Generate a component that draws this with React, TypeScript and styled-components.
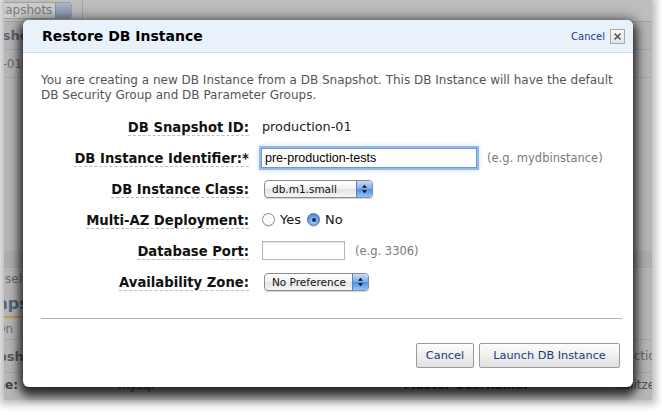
import React from "react";
import styled, { createGlobalStyle } from "styled-components";

const Global = createGlobalStyle`
  html, body { margin: 0; padding: 0; background: #fff; }
  body { width: 662px; height: 415px; overflow: hidden; font-family: "DejaVu Sans", Verdana, sans-serif; }
  * { box-sizing: border-box; }
`;

const Stage = styled.div`
  width: 662px;
  height: 415px;
  padding: 0 10px 15px 4px;
  background: #fff;
`;

const Backdrop = styled.div`
  position: relative;
  height: 100%;
  background: #b6b6b6;
  box-shadow: 0 0 8px 4px #b9b9b9;
`;

/* ---------- dimmed console behind the dialog ---------- */
const ConsolePage = styled.div`
  height: 100%;
  overflow: hidden;
  display: flex;
  flex-direction: column;
  color: #6a6a6a;
  font: 12px "DejaVu Sans", Verdana, sans-serif;
`;

const TopBar = styled.div`
  height: 22px;
  flex: none;
  display: flex;
  align-items: center;
  background: #bebebe;
  border-bottom: 1px solid #a4a4a4;
`;

const ViewSelect = styled.div`
  margin-left: -19px;
  width: 87px;
  height: 17px;
  display: flex;
  border: 1px solid #9d9d9d;
  border-radius: 3px;
  background: #cdcdcd;
  overflow: hidden;
`;

const ViewSelectText = styled.span`
  flex: 1;
  padding-left: 4px;
  line-height: 15px;
  color: #7a7a7a;
`;

const ViewStepper = styled.span`
  width: 16px;
  background: linear-gradient(#a9b6c8, #8797ae);
  border-left: 1px solid #8a94a3;
`;

const ToolbarSep = styled.span`
  margin-left: 10px;
  width: 1px;
  height: 22px;
  background: #a6a6a6;
`;

const ListRow = styled.div<{ $h: number; $band?: boolean }>`
  height: ${(p) => p.$h}px;
  flex: none;
  display: flex;
  align-items: center;
  white-space: nowrap;
  border-bottom: 1px solid #a7a7a7;
  background: ${(p) => (p.$band ? "#adadad" : "transparent")};
`;

const Spacer = styled.div<{ $h: number }>`
  height: ${(p) => p.$h}px;
  flex: none;
`;

const CutText = styled.span<{ $x: number; $bold?: boolean; $size?: number; $color?: string }>`
  margin-left: ${(p) => p.$x}px;
  font-weight: ${(p) => (p.$bold ? 700 : 400)};
  font-size: ${(p) => p.$size ?? 12}px;
  color: ${(p) => p.$color ?? "#6a6a6a"};
  white-space: nowrap;
`;

const PlainRow = styled.div<{ $h: number }>`
  height: ${(p) => p.$h}px;
  flex: none;
  display: flex;
  align-items: center;
  white-space: nowrap;
`;

const TabLine = styled.div`
  height: 2px;
  width: 20px;
  flex: none;
  background: #c49a4a;
`;

const TabBox = styled.span`
  margin-left: 8px;
  width: 8px;
  height: 18px;
  border: 1px solid #9a9a9a;
  border-right: none;
  background: #bcbcbc;
`;

const DetailRow = styled.div`
  height: 24px;
  flex: none;
  display: grid;
  grid-template-columns: 14px 300px 210px 1fr;
  align-items: center;
  white-space: nowrap;
`;

const DetailLabel = styled.span`
  display: flex;
  justify-content: flex-end;
  font-weight: 700;
  color: #3f3f3f;
`;

const DetailValue = styled.span<{ $pad: number }>`
  padding-left: ${(p) => p.$pad}px;
  color: #505050;
`;

/* ---------- dialog ---------- */
const Dialog = styled.div`
  position: absolute;
  left: 19px;
  top: 20px;
  width: 610px;
  height: 367px;
  display: flex;
  flex-direction: column;
  background: #fff;
  border-radius: 6px;
  overflow: hidden;
  box-shadow: 0 6px 10px 3px rgba(0, 0, 0, 0.7), 0 0 14px 3px rgba(0, 0, 0, 0.35);
`;

const Header = styled.div`
  height: 33px;
  flex: none;
  display: flex;
  align-items: center;
  justify-content: space-between;
  padding: 0 8px 0 19px;
  background: #e9f2fb;
  border-bottom: 1px solid #c8dbef;
`;

const Title = styled.h1`
  margin: 0;
  font: 700 14px "DejaVu Sans", Verdana, sans-serif;
  color: #000;
`;

const HeaderActions = styled.div`
  display: flex;
  align-items: center;
  gap: 5px;
`;

const CancelLink = styled.a`
  font: 10px "DejaVu Sans", Verdana, sans-serif;
  color: #1c3c8c;
  text-decoration: none;
`;

const CloseBox = styled.span`
  width: 15px;
  height: 15px;
  display: flex;
  align-items: center;
  justify-content: center;
  border: 1px solid #a8a8a8;
  background: linear-gradient(#fafafa, #e2e2e2);
`;

const Body = styled.div`
  flex: 1;
  display: flex;
  flex-direction: column;
  padding: 20px 11px 0 18px;
`;

const Intro = styled.p`
  margin: 0;
  font: 12px/15px "DejaVu Sans", Verdana, sans-serif;
  color: #555;
`;

const Form = styled.div`
  margin-top: 8px;
  display: grid;
  grid-template-columns: 208px 1fr;
  grid-auto-rows: 31px;
  column-gap: 12px;
  align-items: center;
`;

const LabelCell = styled.div`
  justify-self: end;
`;

const Label = styled.span`
  display: inline-block;
  font: 700 13.2px/15px "DejaVu Sans", Verdana, sans-serif;
  color: #111;
  border-bottom: 1px dashed #bdbdbd;
`;

const ValueCell = styled.div`
  display: flex;
  align-items: center;
  gap: 10px;
`;

const StaticValue = styled.span`
  margin-left: 1px;
  font: 12.8px "DejaVu Sans", Verdana, sans-serif;
  color: #222;
`;

const TextInput = styled.div<{ $w: number; $focus?: boolean }>`
  margin-left: ${(p) => (p.$focus ? 0 : 1)}px;
  width: ${(p) => p.$w}px;
  height: ${(p) => (p.$focus ? 20 : 19)}px;
  display: flex;
  align-items: center;
  padding-left: 3px;
  font: 12.5px "Liberation Sans", Arial, sans-serif;
  color: #000;
  background: #fff;
  border: 1px solid ${(p) => (p.$focus ? "#6f99d2" : "#b5b5b5")};
  box-shadow: ${(p) =>
    p.$focus
      ? "0 0 0 2px rgba(125, 170, 230, 0.75), 0 0 4px 2px rgba(125, 170, 230, 0.45)"
      : "inset 0 1px 1px rgba(0,0,0,0.12)"};
`;

const Hint = styled.span`
  font: 11.5px "DejaVu Sans", Verdana, sans-serif;
  color: #7a7a7a;
`;

const Select = styled.div<{ $w: number }>`
  margin-left: 3px;
  width: ${(p) => p.$w}px;
  height: 18px;
  display: flex;
  border: 1px solid #8b8b8b;
  border-radius: 4px;
  overflow: hidden;
  background: linear-gradient(#ffffff, #f3f3f3 50%, #e4e4e4 51%, #f5f5f5);
  box-shadow: 0 1px 1px rgba(0, 0, 0, 0.18);
  font: 10.5px "DejaVu Sans", Verdana, sans-serif;
  color: #111;
`;

const SelectText = styled.span`
  flex: 1;
  display: flex;
  align-items: center;
  padding-left: 7px;
  white-space: nowrap;
  overflow: hidden;
`;

const Stepper = styled.span`
  width: 16px;
  flex: none;
  display: flex;
  align-items: center;
  justify-content: center;
  border-left: 1px solid #5b82bb;
  background: linear-gradient(#c6dcf8, #7eaeec 48%, #4f8ee3 52%, #93c2f6);
`;

const RadioGroup = styled.div`
  display: flex;
  align-items: center;
  margin-left: 1px;
  font: 13px "DejaVu Sans", Verdana, sans-serif;
  color: #111;
`;

const RadioOption = styled.label`
  display: flex;
  align-items: center;
  gap: 5px;
  margin-right: 6px;
`;

const RadioDot = styled.span<{ $on?: boolean }>`
  width: 13px;
  height: 13px;
  border-radius: 50%;
  display: flex;
  align-items: center;
  justify-content: center;
  border: 1px solid ${(p) => (p.$on ? "#4a6fa8" : "#8e8e8e")};
  background: ${(p) =>
    p.$on
      ? "radial-gradient(circle at 50% 70%, #a8d0fb, #5a9aea 60%, #3f7fd6)"
      : "linear-gradient(#f6f6f6, #ffffff)"};
  box-shadow: 0 1px 1px rgba(0, 0, 0, 0.15);
  &::after {
    content: "";
    width: 4px;
    height: 4px;
    border-radius: 50%;
    background: #1c2a40;
    display: ${(p) => (p.$on ? "block" : "none")};
  }
`;

const Divider = styled.hr`
  margin: 21px 0 0 0;
  border: none;
  height: 1px;
  background: #b3b3b3;
`;

const Footer = styled.div`
  margin-top: 24px;
  display: flex;
  justify-content: flex-end;
  gap: 5px;
  padding-right: 2px;
`;

const Button = styled.button<{ $w: number }>`
  width: ${(p) => p.$w}px;
  height: 25px;
  padding: 0;
  font: 11.3px "DejaVu Sans", Verdana, sans-serif;
  color: #1c3a7a;
  border: 1px solid #9b9b9b;
  border-radius: 2px;
  background: linear-gradient(#fdfdfd, #ececec 60%, #e1e1e1);
  white-space: nowrap;
`;

const Arrows = () => (
  <svg width="7" height="10" viewBox="0 0 7 10">
    <path d="M3.5 0.8 L6 3.8 L1 3.8 Z" fill="#111" />
    <path d="M3.5 9.2 L6 6.2 L1 6.2 Z" fill="#111" />
  </svg>
);

const CloseGlyph = () => (
  <svg width="9" height="9" viewBox="0 0 9 9">
    <path d="M1.5 1.5 L7.5 7.5 M7.5 1.5 L1.5 7.5" stroke="#555" strokeWidth="1.6" />
  </svg>
);

export default function App() {
  return (
    <>
      <Global />
      <Stage>
        <Backdrop>
          <ConsolePage>
            <TopBar>
              <ViewSelect>
                <ViewSelectText>Snapshots</ViewSelectText>
                <ViewStepper />
              </ViewSelect>
              <ToolbarSep />
            </TopBar>
            <ListRow $h={28}>
              <CutText $x={-38} $bold $size={13} $color="#5e6470">Snapshots</CutText>
            </ListRow>
            <ListRow $h={28}>
              <CutText $x={-66}>production-01</CutText>
            </ListRow>
            <Spacer $h={173} />
            <ListRow $h={17} $band />
            <PlainRow $h={22}>
              <CutText $x={1}>selected</CutText>
            </PlainRow>
            <PlainRow $h={26}>
              <CutText $x={-30} $bold $size={16} $color="#56657a">Snapshots</CutText>
            </PlainRow>
            <TabLine />
            <ListRow $h={22}>
              <CutText $x={-8}>On</CutText>
              <TabBox />
            </ListRow>
            <ListRow $h={33}>
              <CutText $x={-34} $bold $size={13} $color="#5a5a5a">Snapshot</CutText>
              <CutText $x={560}>production</CutText>
            </ListRow>
            <DetailRow>
              <DetailLabel>Engine:</DetailLabel>
              <DetailValue $pad={100}>mysql</DetailValue>
              <DetailLabel>Master Username:</DetailLabel>
              <DetailValue $pad={88}>kulitzer</DetailValue>
            </DetailRow>
          </ConsolePage>

          <Dialog>
            <Header>
              <Title>Restore DB Instance</Title>
              <HeaderActions>
                <CancelLink href="#">Cancel</CancelLink>
                <CloseBox>
                  <CloseGlyph />
                </CloseBox>
              </HeaderActions>
            </Header>
            <Body>
              <Intro>
                You are creating a new DB Instance from a DB Snapshot. This DB Instance will have the default
                <br />
                DB Security Group and DB Parameter Groups.
              </Intro>
              <Form>
                <LabelCell>
                  <Label>DB Snapshot ID:</Label>
                </LabelCell>
                <ValueCell>
                  <StaticValue>production-01</StaticValue>
                </ValueCell>

                <LabelCell>
                  <Label>DB Instance Identifier:*</Label>
                </LabelCell>
                <ValueCell>
                  <TextInput $w={216} $focus>pre-production-tests</TextInput>
                  <Hint>(e.g. mydbinstance)</Hint>
                </ValueCell>

                <LabelCell>
                  <Label>DB Instance Class:</Label>
                </LabelCell>
                <ValueCell>
                  <Select $w={109}>
                    <SelectText>db.m1.small</SelectText>
                    <Stepper>
                      <Arrows />
                    </Stepper>
                  </Select>
                </ValueCell>

                <LabelCell>
                  <Label>Multi-AZ Deployment:</Label>
                </LabelCell>
                <ValueCell>
                  <RadioGroup>
                    <RadioOption>
                      <RadioDot />
                      Yes
                    </RadioOption>
                    <RadioOption>
                      <RadioDot $on />
                      No
                    </RadioOption>
                  </RadioGroup>
                </ValueCell>

                <LabelCell>
                  <Label>Database Port:</Label>
                </LabelCell>
                <ValueCell>
                  <TextInput $w={83} />
                  <Hint>(e.g. 3306)</Hint>
                </ValueCell>

                <LabelCell>
                  <Label>Availability Zone:</Label>
                </LabelCell>
                <ValueCell>
                  <Select $w={105}>
                    <SelectText>No Preference</SelectText>
                    <Stepper>
                      <Arrows />
                    </Stepper>
                  </Select>
                </ValueCell>
              </Form>
              <Divider />
              <Footer>
                <Button $w={58}>Cancel</Button>
                <Button $w={141}>Launch DB Instance</Button>
              </Footer>
            </Body>
          </Dialog>
        </Backdrop>
      </Stage>
    </>
  );
}
